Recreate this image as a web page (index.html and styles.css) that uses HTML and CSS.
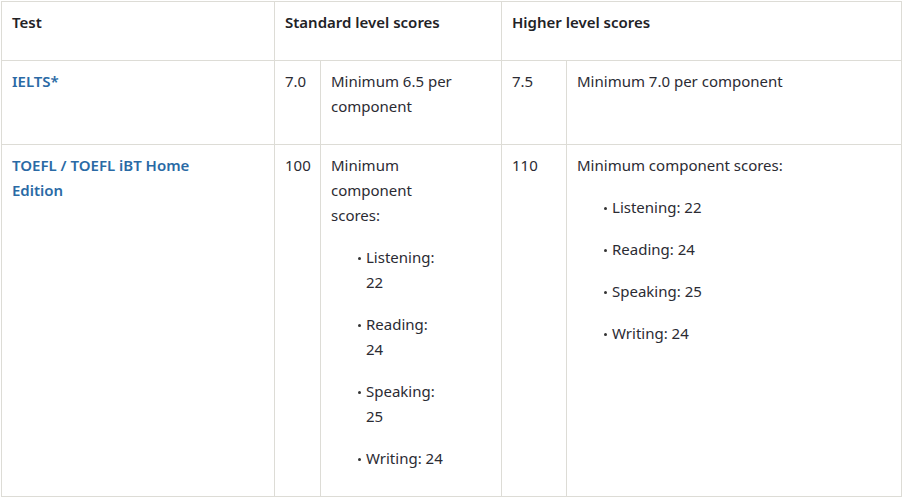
FILE: index.html
```html
<!DOCTYPE html>
<html>
<head>
<meta charset="utf-8">
<link rel="stylesheet" href="styles.css">
</head>
<body>
<table class="scores">
  <colgroup>
    <col class="c-test">
    <col class="c-score">
    <col class="c-desc">
    <col class="c-score2">
    <col class="c-desc2">
  </colgroup>
  <thead>
    <tr>
      <th>Test</th>
      <th colspan="2">Standard level scores</th>
      <th colspan="2">Higher level scores</th>
    </tr>
  </thead>
  <tbody>
    <tr>
      <td class="first"><a class="link" href="#">IELTS*</a></td>
      <td>7.0</td>
      <td class="narrow">Minimum 6.5 per component</td>
      <td>7.5</td>
      <td>Minimum 7.0 per component</td>
    </tr>
    <tr>
      <td class="first links"><a class="link" href="#">TOEFL</a> / <a class="link" href="#">TOEFL iBT Home Edition</a></td>
      <td>100</td>
      <td class="narrow">
        <p class="lead">Minimum component scores:</p>
        <ul class="bullets">
          <li>Listening: 22</li>
          <li>Reading: 24</li>
          <li>Speaking: 25</li>
          <li>Writing: 24</li>
        </ul>
      </td>
      <td>110</td>
      <td>
        <p class="lead">Minimum component scores:</p>
        <ul class="bullets">
          <li>Listening: 22</li>
          <li>Reading: 24</li>
          <li>Speaking: 25</li>
          <li>Writing: 24</li>
        </ul>
      </td>
    </tr>
  </tbody>
</table>
</body>
</html>
```

FILE: styles.css
```css
html, body {
  margin: 0;
  background: #ffffff;
}
body {
  padding: 1px 0 0 1px;
  font-family: "Noto Sans", "Open Sans", sans-serif;
  font-size: 15px;
  line-height: 25px;
  color: #2b2b33;
}
.scores {
  border-collapse: collapse;
  table-layout: fixed;
  width: 900px;
}
.c-test { width: 273px; }
.c-score { width: 46px; }
.c-desc { width: 181px; }
.c-score2 { width: 65px; }
.c-desc2 { width: 335px; }
.scores th,
.scores td {
  border: 1px solid #dddcd6;
  padding: 8px 10px 25px 10px;
  text-align: left;
  vertical-align: top;
}
.scores th {
  font-weight: 600;
  color: #222226;
}
.scores td.first {
  padding-right: 70px;
}
.scores td.links {
  color: #2a6aa5;
  font-weight: 600;
}
.scores td.narrow {
  padding-right: 44px;
}
.link {
  color: #2a6aa5;
  font-weight: 600;
  text-decoration: none;
}
.lead {
  margin: 0;
}
.bullets {
  list-style: none;
  margin: 0;
  padding: 0 0 0 35px;
}
.narrow .bullets {
  padding-right: 12px;
}
.bullets li {
  position: relative;
  margin-top: 17px;
}
.bullets li::before {
  content: "";
  position: absolute;
  left: -8px;
  top: 12px;
  width: 3px;
  height: 3px;
  border-radius: 50%;
  background: #333;
}
```
